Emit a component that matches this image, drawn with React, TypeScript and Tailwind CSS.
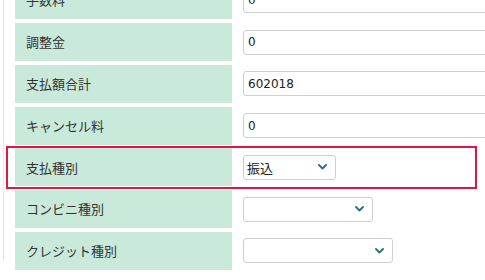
import React from "react";

const Chevron = () => (
  <svg width="9" height="6" viewBox="0 0 9 6" className="shrink-0">
    <path d="M1 1 L4.5 4.5 L8 1" fill="none" stroke="#2b6f6e" strokeWidth="1.8" strokeLinecap="round" strokeLinejoin="round" />
  </svg>
);

type Row = { label: string; kind: "input" | "select"; value?: string; w?: string; highlight?: boolean };

const rows: Row[] = [
  { label: "手数料", kind: "input", value: "0" },
  { label: "調整金", kind: "input", value: "0" },
  { label: "支払額合計", kind: "input", value: "602018" },
  { label: "キャンセル料", kind: "input", value: "0" },
  { label: "支払種別", kind: "select", value: "振込", w: "w-[93px]", highlight: true },
  { label: "コンビニ種別", kind: "select", value: "", w: "w-[130px]" },
  { label: "クレジット種別", kind: "select", value: "", w: "w-[150px]" },
];

export default function App() {
  return (
    <div className="w-[485px] h-[280px] overflow-hidden bg-white">
      <div className="ml-[3px] h-full border-l border-[#e6e6e6] pl-[11px]">
        <div className="-mt-[18.8px] flex flex-col gap-[3.8px]">
          {rows.map((r) => (
            <div key={r.label} className="relative flex h-[38px] items-center">
              <div className="flex h-full w-[217px] shrink-0 items-center bg-[#c9e9db] pl-[11px] text-[13px] text-[#333] [font-family:'Noto_Sans_CJK_JP',sans-serif]">
                {r.label}
              </div>
              <div className="ml-[11px] flex items-center">
                {r.kind === "input" ? (
                  <div className="flex h-[25px] w-[260px] items-center rounded-[3px] border border-[#cfcfcf] bg-white pl-[4px] text-[12px] text-[#222] [font-family:'DejaVu_Sans',sans-serif]">
                    {r.value}
                  </div>
                ) : (
                  <div className={`flex h-[25px] ${r.w} items-center justify-between rounded-[3px] border border-[#cfcfcf] bg-white pl-[3px] pr-[8px] text-[13px] text-[#222] [font-family:'Noto_Sans_CJK_JP',sans-serif]`}>
                    <span>{r.value}</span>
                    <Chevron />
                  </div>
                )}
              </div>
              {r.highlight && (
                <div className="pointer-events-none absolute -left-[9px] -top-[2px] -bottom-[2.5px] w-[471px] border-2 border-[#e2163f]" />
              )}
            </div>
          ))}
        </div>
      </div>
    </div>
  );
}
